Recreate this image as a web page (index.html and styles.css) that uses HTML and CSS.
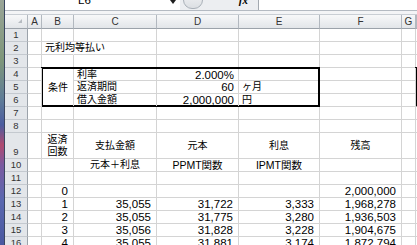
FILE: index.html
```html
<!DOCTYPE html>
<html lang="ja">
<head>
    <meta charset="UTF-8">
    <title>元利均等払い</title>
    <link rel="stylesheet" href="styles.css">
</head>
<body>
    <div class="desk"></div>
    <div class="excel">
        <div class="formula-bar">
            <div class="namebox"><span class="ref">L6</span><span class="drop"></span></div>
            <div class="fxarea"><span class="pill"></span><span class="fx">fx</span></div>
            <div class="formula"></div>
        </div>
        <div class="gap"></div>

        <div class="row head">
            <div class="corner"><span class="tri"></span></div>
            <div>A</div><div>B</div><div>C</div><div>D</div><div>E</div><div>F</div><div>G</div><div></div>
        </div>

        <div class="row cells">
            <div class="rh">1</div><div></div><div></div><div></div><div></div><div></div><div></div><div></div><div></div>
        </div>
        <div class="row cells">
            <div class="rh">2</div><div></div><div class="ja spill">元利均等払い</div><div></div><div></div><div></div><div></div><div></div><div></div>
        </div>
        <div class="row cells">
            <div class="rh">3</div><div></div><div></div><div></div><div></div><div></div><div></div><div></div><div></div>
        </div>

        <!-- rows 4-6: conditions box -->
        <div class="group cells">
            <div class="box">
                <div class="merged ja">条件</div>
                <div class="ja">利率</div><div class="r">2.000%</div><div class="end"></div>
                <div class="ja">返済期間</div><div class="r">60</div><div class="ja end">ヶ月</div>
                <div class="ja last">借入金額</div><div class="r last">2,000,000</div><div class="ja end last">円</div>
            </div>
            <div class="hbox"></div>
            <div class="rh">4</div><div></div><div></div><div></div>
            <div class="rh">5</div><div></div><div></div><div></div>
            <div class="rh">6</div><div></div><div></div><div></div>
        </div>

        <div class="row cells">
            <div class="rh">7</div><div></div><div></div><div></div><div></div><div></div><div></div><div></div><div></div>
        </div>
        <div class="row cells">
            <div class="rh">8</div><div></div><div></div><div></div><div></div><div></div><div></div><div></div><div></div>
        </div>
        <div class="row cells tall">
            <div class="rh">9</div><div></div>
            <div class="ja wrap">返済<br>回数</div>
            <div class="ja c">支払金額</div>
            <div class="ja c">元本</div>
            <div class="ja c">利息</div>
            <div class="ja c">残高</div>
            <div></div><div></div>
        </div>
        <div class="row cells">
            <div class="rh">10</div><div></div><div></div>
            <div class="ja c">元本＋利息</div>
            <div class="mix c">PPMT関数</div>
            <div class="mix c">IPMT関数</div>
            <div></div><div></div><div></div>
        </div>
        <div class="row cells">
            <div class="rh">11</div><div></div><div></div><div></div><div></div><div></div><div></div><div></div><div></div>
        </div>
        <div class="row cells">
            <div class="rh">12</div><div></div><div class="r">0</div><div></div><div></div><div></div><div class="r">2,000,000</div><div></div><div></div>
        </div>
        <div class="row cells">
            <div class="rh">13</div><div></div><div class="r">1</div><div class="r">35,055</div><div class="r">31,722</div><div class="r">3,333</div><div class="r">1,968,278</div><div></div><div></div>
        </div>
        <div class="row cells">
            <div class="rh">14</div><div></div><div class="r">2</div><div class="r">35,055</div><div class="r">31,775</div><div class="r">3,280</div><div class="r">1,936,503</div><div></div><div></div>
        </div>
        <div class="row cells">
            <div class="rh">15</div><div></div><div class="r">3</div><div class="r">35,056</div><div class="r">31,828</div><div class="r">3,228</div><div class="r">1,904,675</div><div></div><div></div>
        </div>
        <div class="row cells">
            <div class="rh">16</div><div></div><div class="r">4</div><div class="r">35,055</div><div class="r">31,881</div><div class="r">3,174</div><div class="r">1,872,794</div><div></div><div></div>
        </div>
    </div>
</body>
</html>
```

FILE: styles.css
```css
:root {
    --cols: 23px 14px 32px 83px 82px 81px 82px 14px 1fr;
    --grid: #d4d4d4;
}
body {
    margin: 0;
    display: flex;
    height: 245px;
    overflow: hidden;
    font-family: "Liberation Sans", "Noto Sans CJK JP", sans-serif;
    font-size: 11.5px;
    color: #000;
    background: #fff;
}
.desk {
    flex: none;
    width: 4px;
    border-right: 1px solid #3a4660;
    background: linear-gradient(#9aa598 0, #7e967a 60px, #5f7c98 100px, #4b5ca0 125px, #b04a70 145px, #7a5aa0 165px, #5a68b0 200px, #4a58a0 245px);
}
.excel {
    flex: 1;
    min-width: 0;
}

/* formula bar */
.formula-bar {
    display: flex;
    height: 10px;
    border-bottom: 1px solid #b4bac2;
    overflow: hidden;
}
.namebox {
    width: 175px;
    display: flex;
    background: #fff;
}
.ref {
    padding-left: 73px;
    margin-top: -5px;
    line-height: 11px;
}
.drop {
    margin-left: auto;
    margin-right: 4px;
    width: 0;
    height: 0;
    border-left: 3px solid transparent;
    border-right: 3px solid transparent;
    border-top: 4px solid #1e1e1e;
}
.fxarea {
    width: 79px;
    box-sizing: border-box;
    display: flex;
    background: #eceef1;
    border-right: 1px solid #a3a9b0;
}
.pill {
    width: 20px;
    height: 18px;
    margin: -9px 0 0 3px;
    box-sizing: border-box;
    border: 1px solid #a9b0b8;
    border-radius: 10px;
    background: linear-gradient(#f2f3f5, #dcdfe3);
}
.fx {
    margin: -5px 10px 0 auto;
    font: italic bold 11px "Liberation Serif", serif;
    line-height: 11px;
}
.formula {
    flex: 1;
    background: #fff;
}
.gap {
    height: 3px;
    background: #f3f4f6;
    border-bottom: 1px solid #c9ced4;
}

/* sheet grid */
.row {
    display: grid;
    grid-template-columns: var(--cols);
    height: 13px;
}
.row.head {
    height: 14px;
}
.row.tall {
    height: 26px;
}
.cells > div, .box > div {
    box-sizing: border-box;
    border-right: 1px solid var(--grid);
    border-bottom: 1px solid var(--grid);
    padding: 0 3px;
    line-height: 12px;
    white-space: nowrap;
    min-width: 0;
}
.head > div {
    box-sizing: border-box;
    background: linear-gradient(#f7f8f9, #e2e5e9);
    border-right: 1px solid #b2b8bf;
    border-bottom: 1px solid #9ba2aa;
    text-align: center;
    font-size: 10px;
    line-height: 13px;
    color: #333;
}
.head > .corner {
    display: flex;
    justify-content: flex-end;
    align-items: flex-end;
    padding: 0 5px 5px 0;
}
.tri {
    width: 0;
    height: 0;
    border-left: 4px solid transparent;
    border-bottom: 4px solid #b6bbc1;
}
.cells > .rh {
    background: #e3e6ea;
    border-right-color: #9ba2aa;
    border-bottom-color: #c4c9cf;
    text-align: center;
    font-size: 9.5px;
    color: #333;
    padding: 0;
}
.tall > .rh {
    line-height: 12px;
    padding-top: 13px;
}

.ja {
    font-size: 10px;
}
.mix {
    font-size: 10.5px;
}
.c {
    text-align: center;
}
.r {
    text-align: right;
}
.cells > .r {
    padding-right: 5px;
}
.cells > .spill {
    border-right-color: transparent;
}
.tall > div {
    line-height: 25px;
}
.tall > .wrap {
    line-height: 12px;
    padding-top: 1px;
    text-align: center;
}

/* rows 4-6 with the thick border */
.group {
    display: grid;
    grid-template-columns: var(--cols);
    grid-template-rows: 13px 13px 13px;
}
.group > .box {
    grid-column: 3 / 7;
    grid-row: 1 / 4;
    margin: -1px 0 0 -1px;
    padding: 0;
    border: 2px solid #000;
    display: grid;
    grid-template-columns: 31px 83px 82px 1fr;
    grid-template-rows: 12px 13px 1fr;
}
.box > .merged {
    grid-row: 1 / 4;
    display: flex;
    align-items: center;
    justify-content: center;
    border-bottom: none;
}
.box > .r {
    padding-right: 4px;
}
.box > .end {
    border-right: none;
}
.box > .last {
    border-bottom: none;
}
.group > .hbox {
    grid-column: 9;
    grid-row: 1 / 4;
    margin: -1px 0 0 -1px;
    border-left: 2px solid #000;
}
```
